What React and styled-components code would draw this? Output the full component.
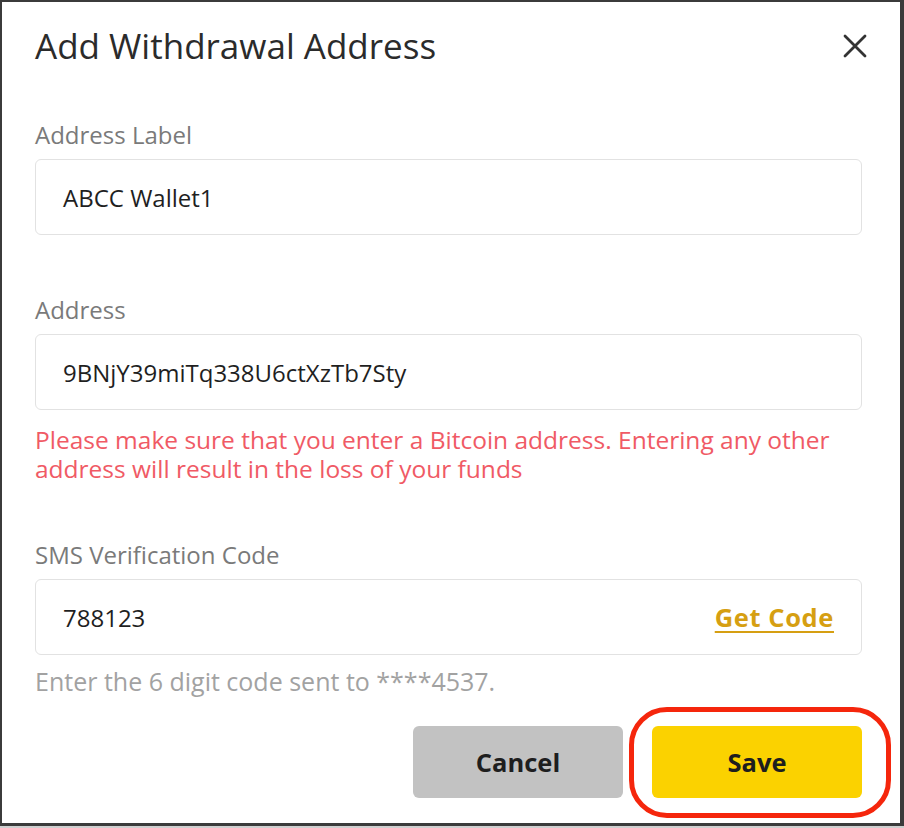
import React from 'react'
import styled, { createGlobalStyle } from 'styled-components'

const GlobalStyle = createGlobalStyle`
  html, body {
    margin: 0;
    padding: 0;
    background: #cfcfcf;
  }
  * {
    box-sizing: border-box;
  }
`

const Frame = styled.div`
  width: 904px;
  height: 826px;
  background: #ffffff;
  border: 2px solid #3b3b3b;
  border-right-width: 4px;
  border-bottom-width: 3px;
  padding: 0 38px 0 33px;
  font-family: "Open Sans", Lato, sans-serif;
  display: flex;
  flex-direction: column;
`

const Header = styled.div`
  height: 87px;
  display: flex;
  align-items: center;
  justify-content: space-between;
`

const Title = styled.h1`
  margin: 0;
  font-size: 35px;
  font-weight: 400;
  color: #2b2b2b;
`

const CloseButton = styled.button`
  border: none;
  background: none;
  padding: 0;
  margin-right: -5px;
  width: 24px;
  height: 24px;
  display: flex;
  cursor: pointer;
`

const Field = styled.div`
  display: flex;
  flex-direction: column;
  margin-top: ${props => props.top}px;
`

const Label = styled.label`
  font-size: 24px;
  line-height: 28px;
  color: #7a7a7a;
  margin-bottom: 10px;
`

const InputBox = styled.div`
  height: 76px;
  border: 1.5px solid #e2e2e2;
  border-radius: 6px;
  padding: 0 27px;
  display: flex;
  align-items: center;
  justify-content: space-between;
`

const Value = styled.span`
  font-size: 24px;
  color: #1f1f1f;
`

const GetCode = styled.a`
  font-size: 25.5px;
  letter-spacing: 0.6px;
  font-weight: 700;
  color: #d69f12;
  text-decoration: underline;
  text-underline-offset: 4px;
  cursor: pointer;
`

const Warning = styled.p`
  margin: 15px 0 0;
  font-size: 24.5px;
  line-height: 29px;
  color: #f05a65;
`

const Hint = styled.p`
  margin: 12px 0 0;
  font-size: 25px;
  line-height: 28px;
  color: #a2a2a2;
`

const Actions = styled.div`
  margin-top: 31px;
  display: flex;
  justify-content: flex-end;
  gap: 29px;
`

const Button = styled.button`
  width: 210px;
  height: 72px;
  border: none;
  border-radius: 6px;
  background: ${props => props.primary ? '#fbd200' : '#c2c2c2'};
  color: #1e1e1e;
  font-family: inherit;
  font-size: 25.5px;
  font-weight: 700;
  cursor: pointer;
`

const Highlight = styled.div`
  position: relative;
`

const Ring = styled.span`
  position: absolute;
  top: -19px;
  bottom: -20px;
  left: -23px;
  right: -29px;
  border: 5px solid #f5260c;
  border-radius: 38px;
  pointer-events: none;
`

function App() {
  return (
    <>
      <GlobalStyle />
      <Frame>
        <Header>
          <Title>Add Withdrawal Address</Title>
          <CloseButton aria-label="close">
            <svg width="24" height="24" viewBox="0 0 24 24">
              <path d="M2 2 L22 22 M22 2 L2 22" stroke="#333" strokeWidth="2.8" strokeLinecap="round" />
            </svg>
          </CloseButton>
        </Header>

        <Field top={32}>
          <Label>Address Label</Label>
          <InputBox>
            <Value>ABCC Wallet1</Value>
          </InputBox>
        </Field>

        <Field top={61}>
          <Label>Address</Label>
          <InputBox>
            <Value>9BNjY39miTq338U6ctXzTb7Sty</Value>
          </InputBox>
        </Field>

        <Warning>
          Please make sure that you enter a Bitcoin address. Entering any other
          address will result in the loss of your funds
        </Warning>

        <Field top={58}>
          <Label>SMS Verification Code</Label>
          <InputBox>
            <Value>788123</Value>
            <GetCode>Get Code</GetCode>
          </InputBox>
        </Field>

        <Hint>Enter the 6 digit code sent to ****4537.</Hint>

        <Actions>
          <Button>Cancel</Button>
          <Highlight>
            <Button primary>Save</Button>
            <Ring />
          </Highlight>
        </Actions>
      </Frame>
    </>
  )
}

export default App
